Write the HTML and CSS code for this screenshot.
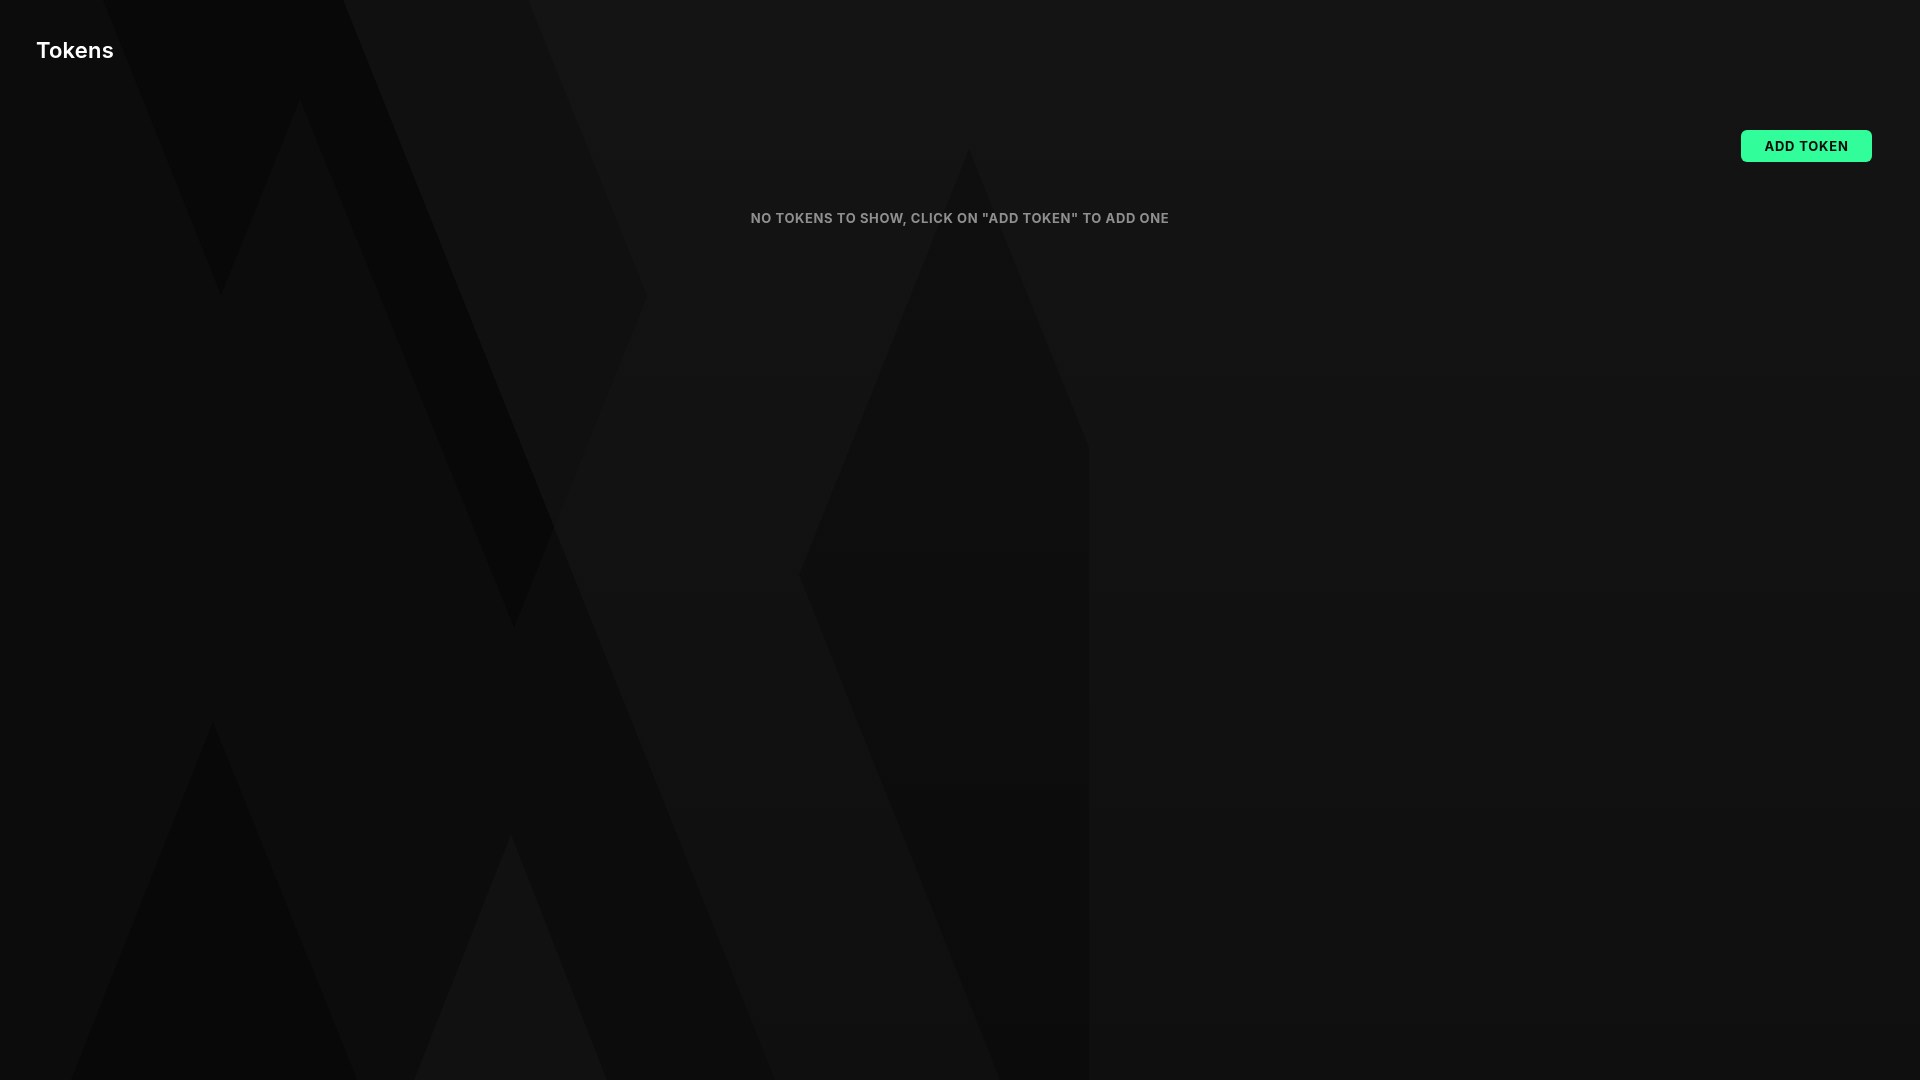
FILE: index.html
```html
<!DOCTYPE html>
<html lang="en">
<head>
<meta charset="utf-8">
<title>Tokens</title>
<link rel="stylesheet" href="styles.css">
</head>
<body>
<div class="backdrop" aria-hidden="true">
  <svg class="backdrop-art" viewBox="0 0 1920 1080" preserveAspectRatio="none" xmlns="http://www.w3.org/2000/svg">
    <defs>
      <linearGradient id="bgGrad" x1="0" y1="0" x2="0" y2="1">
        <stop offset="0" stop-color="#141414"/>
        <stop offset="1" stop-color="#0f0f0f"/>
      </linearGradient>
      <linearGradient id="polyGrad" x1="0" y1="0" x2="0" y2="1">
        <stop offset="0" stop-color="#0f0f0f"/>
        <stop offset="1" stop-color="#0b0b0b"/>
      </linearGradient>
    </defs>
    <rect x="0" y="0" width="1920" height="1080" fill="url(#bgGrad)"/>
    <polygon points="0,0 343,0 775,1080 0,1080" fill="#0c0c0c"/>
    <polygon points="343,0 528,0 647,296 554,527" fill="#101010"/>
    <polygon points="103,0 343,0 554,527 514,627 300,99 221,295" fill="#080808"/>
    <polygon points="213,722 71,1080 357,1080" fill="#080808"/>
    <polygon points="511,834 414,1080 607,1080" fill="#111111"/>
    <polygon points="969,149 1089,447 1089,1080 1000,1080 799,575" fill="url(#polyGrad)"/>
  </svg>
</div>
<main class="page">
  <header class="header">
    <h1 class="title">Tokens</h1>
  </header>
  <div class="toolbar">
    <button class="btn-add" type="button">ADD TOKEN</button>
  </div>
  <p class="empty">NO TOKENS TO SHOW, CLICK ON "ADD TOKEN" TO ADD ONE</p>
</main>
</body>
</html>
```
FILE: styles.css
```css
html, body {
  margin: 0;
  padding: 0;
  height: 100%;
}

body {
  background: #141414;
  color: #ffffff;
  font-family: Inter, "Open Sans", "Liberation Sans", sans-serif;
  overflow: hidden;
}

.backdrop {
  position: fixed;
  inset: 0;
  z-index: 0;
}

.backdrop-art {
  display: block;
  width: 100%;
  height: 100%;
}

.page {
  position: relative;
  z-index: 1;
  padding: 0 48px 0 36px;
  display: flex;
  flex-direction: column;
}

.header {
  padding-top: 36px;
}

.title {
  margin: 0;
  font-size: 22px;
  line-height: 28px;
  font-weight: 600;
  color: #ffffff;
  letter-spacing: 0.2px;
}

.toolbar {
  margin-top: 66px;
  display: flex;
  justify-content: flex-end;
}

.btn-add {
  width: 131px;
  height: 32px;
  border: none;
  border-radius: 6px;
  background: #31fe9a;
  color: #0b0b0b;
  font-family: Inter, "Open Sans", "Liberation Sans", sans-serif;
  font-size: 13px;
  font-weight: 700;
  letter-spacing: 0.8px;
  line-height: 32px;
  padding: 0;
  cursor: pointer;
}

.empty {
  margin: 48px 0 0 0;
  text-align: center;
  font-size: 13px;
  line-height: 16px;
  font-weight: 700;
  letter-spacing: 0.6px;
  color: #8f8f8f;
  padding-left: 12px;
}
```
